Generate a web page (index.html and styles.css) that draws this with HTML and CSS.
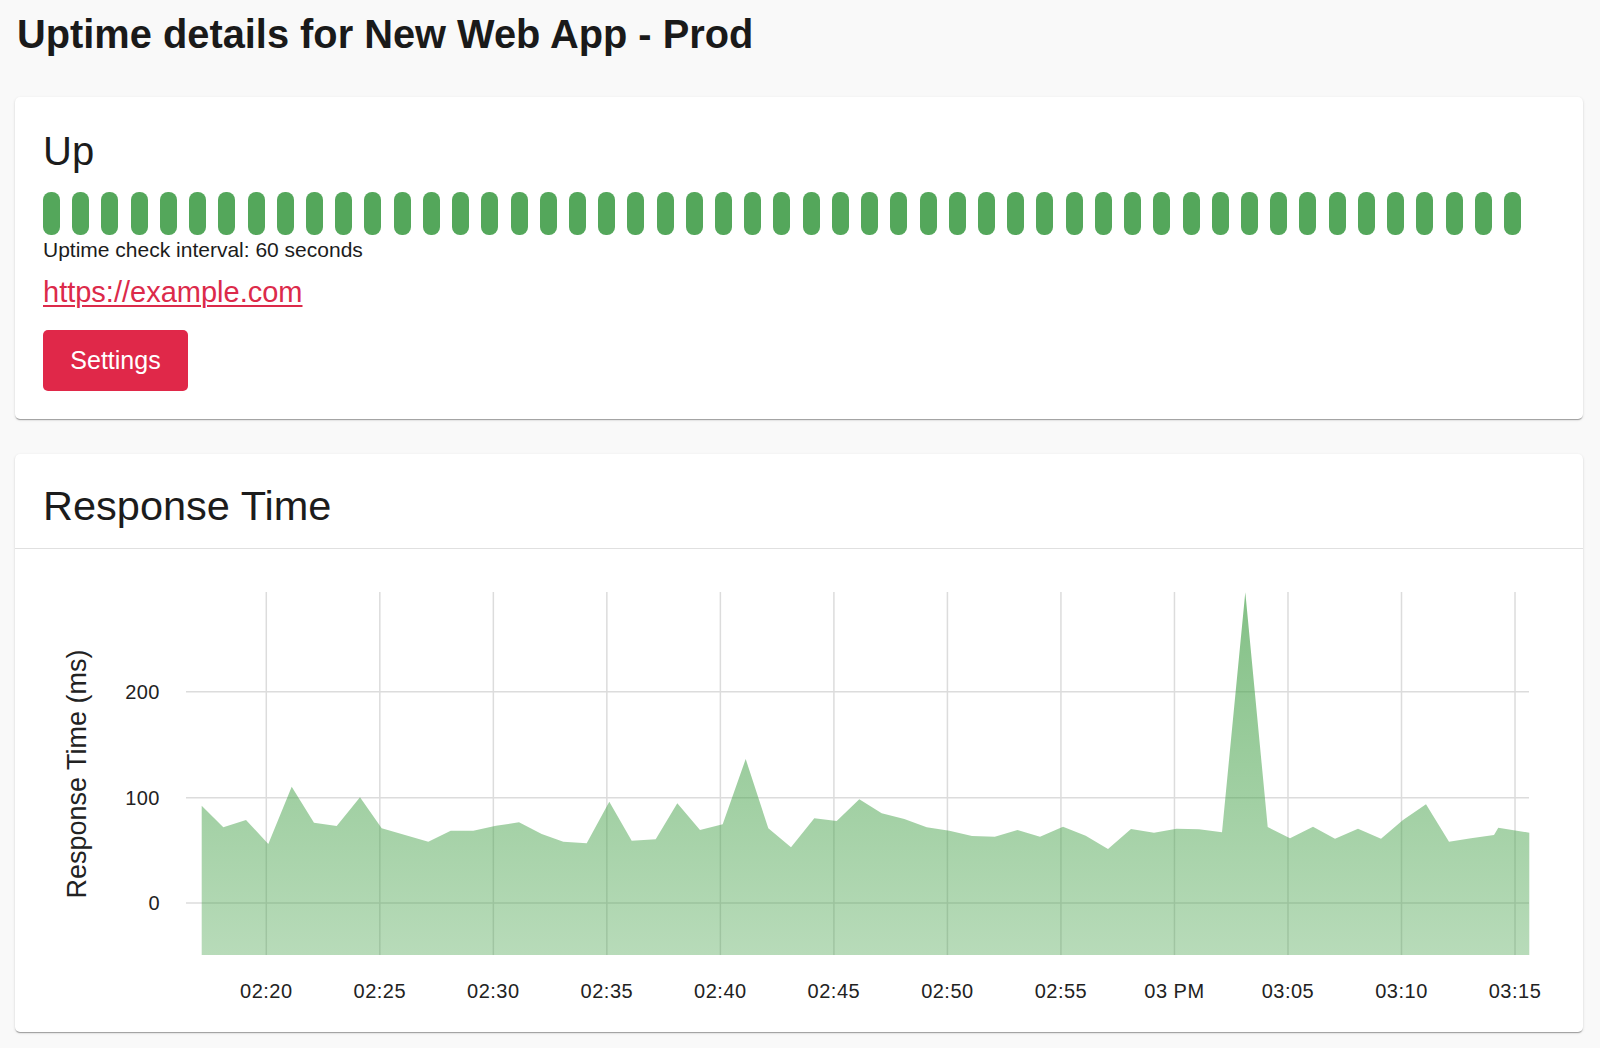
FILE: index.html
```html
<!DOCTYPE html>
<html lang="en">
<head>
  <meta charset="UTF-8">
  <meta name="viewport" content="width=device-width, initial-scale=1.0">
  <title>Uptime details</title>
  <link rel="stylesheet" href="styles.css">
</head>
<body>
  <h1 class="page-title">Uptime details for New Web App - Prod</h1>

  <div class="card status-card">
    <h2 class="status">Up</h2>
    <div class="beats" id="beats"></div>
    <div class="interval">Uptime check interval: 60 seconds</div>
    <a class="monitor-url" href="#">https://example.com</a>
    <div><button class="btn-settings">Settings</button></div>
  </div>

  <div class="card chart-card">
    <div class="card-header">
      <h2>Response Time</h2>
    </div>
    <div class="chart-body">
      <svg class="chart" viewBox="0 0 1568 483" width="1568" height="483">
        <defs>
          <linearGradient id="fill" x1="0" y1="43" x2="0" y2="406" gradientUnits="userSpaceOnUse">
            <stop offset="0" stop-color="#43a047" stop-opacity="0.66"/>
            <stop offset="1" stop-color="#43a047" stop-opacity="0.38"/>
          </linearGradient>
        </defs>
        <g class="grid" id="grid"></g>
        <polygon fill="url(#fill)" points="186.7,406 186.7,256.7 208.3,278.3 231,271 253.3,295 276.7,237.7 299,273.7 321.7,277 345,248.3 366.7,279.3 390,286 413.3,292.7 435.7,281.7 458.3,281.7 481,276.7 504,273.3 526.7,285 548.3,292.7 571.7,294.3 594.3,252.7 616.7,291.7 640.7,290.3 662.3,254.3 685,281 707.7,275.3 730.7,210 753.3,279.3 776,298.3 799.3,269.3 821.7,272 844.3,250.3 866.7,264.3 889.3,270 911.7,278.3 934.4,281.7 957,287 979.8,287.7 1002.5,281 1025,287.7 1048,277.7 1070.7,286.7 1093,300 1116,280 1139,283.7 1161.5,279.7 1184,280.3 1207,283.3 1230.3,43.3 1252.7,278 1275,289.3 1298,277.7 1320,289.7 1343,279.7 1366,289.7 1388,271 1411,255.3 1434,292.7 1456,289.3 1479,286 1483.3,278.7 1514.3,283.7 1514.3,406"/>
        <g class="ticks-y">
          <text x="145" y="142.7">200</text>
          <text x="145" y="248.7">100</text>
          <text x="145" y="354">0</text>
        </g>
        <g class="ticks-x" id="ticks-x"></g>
        <text class="axis-title" transform="translate(62 225) rotate(-90)">Response Time (ms)</text>
      </svg>
    </div>
  </div>

  <script>
    document.addEventListener("DOMContentLoaded", function () {
      const beats = document.getElementById("beats");
      for (let i = 0; i < 51; i++) {
        const beat = document.createElement("span");
        beat.classList.add("beat");
        beats.appendChild(beat);
      }

      const ns = "http://www.w3.org/2000/svg";
      const grid = document.getElementById("grid");
      const ticks = document.getElementById("ticks-x");
      const labels = ["02:20", "02:25", "02:30", "02:35", "02:40", "02:45",
                      "02:50", "02:55", "03 PM", "03:05", "03:10", "03:15"];

      // horizontal lines: 200, 100, 0
      [142.7, 248.7, 354].forEach(function (y) {
        const line = document.createElementNS(ns, "line");
        line.setAttribute("x1", 171);
        line.setAttribute("x2", 1514);
        line.setAttribute("y1", y);
        line.setAttribute("y2", y);
        grid.appendChild(line);
      });

      labels.forEach(function (label, i) {
        const x = 251.3 + i * 113.52;
        const line = document.createElementNS(ns, "line");
        line.setAttribute("x1", x);
        line.setAttribute("x2", x);
        line.setAttribute("y1", 43);
        line.setAttribute("y2", 406);
        grid.appendChild(line);

        const text = document.createElementNS(ns, "text");
        text.setAttribute("x", x);
        text.setAttribute("y", 442);
        text.textContent = label;
        ticks.appendChild(text);
      });
    });
  </script>
</body>
</html>
```

FILE: styles.css
```css
body {
  margin: 0;
  padding: 10px 17px 20px 15px;
  background: #f9f9f9;
  font-family: "Liberation Sans", Arial, sans-serif;
  color: #1c1c1c;
}

.page-title {
  margin: 0 0 39px 2px;
  font-size: 39.8px;
  line-height: 48px;
  font-weight: bold;
  color: #1a1a1a;
}

.card {
  background: #fff;
  border-radius: 5px;
  box-shadow: 0 2px 1px -1px rgba(0, 0, 0, 0.2), 0 1px 1px 0 rgba(0, 0, 0, 0.14), 0 1px 3px 0 rgba(0, 0, 0, 0.12);
}

.status-card {
  padding: 30px 28px 28px 28px;
}

.status {
  margin: 0;
  font-size: 40px;
  line-height: 48px;
  font-weight: normal;
}

.beats {
  display: flex;
  gap: 12.22px;
  margin-top: 17px;
}

.beat {
  width: 17px;
  height: 43px;
  border-radius: 8px;
  background: #54a75b;
}

.interval {
  margin-top: 3px;
  font-size: 21px;
  line-height: 24px;
}

.monitor-url {
  display: inline-block;
  margin-top: 13px;
  font-size: 29px;
  line-height: 34px;
  color: #dc2a4a;
  text-decoration-thickness: 2px;
  text-underline-offset: 3px;
}

.btn-settings {
  margin-top: 21px;
  width: 145px;
  height: 61px;
  border: none;
  border-radius: 5px;
  background: #e02849;
  color: #fff;
  font-family: "Liberation Sans", Arial, sans-serif;
  font-size: 25px;
  cursor: pointer;
}

.chart-card {
  margin-top: 35px;
}

.card-header {
  padding: 28px 28px 18px 28px;
  border-bottom: 1px solid #e0e0e0;
}

.card-header h2 {
  margin: 0;
  font-size: 41.5px;
  line-height: 48px;
  font-weight: normal;
}

.chart-body {
  height: 483px;
}

.chart {
  display: block;
}

.grid line {
  stroke: #dcdcdc;
  stroke-width: 1.5;
}

.chart text {
  font-family: "Liberation Sans", Arial, sans-serif;
  fill: #222;
}

.ticks-y text {
  font-size: 20px;
  letter-spacing: 0.5px;
  text-anchor: end;
  dominant-baseline: central;
}

.ticks-x text {
  font-size: 20px;
  letter-spacing: 0.5px;
  text-anchor: middle;
  dominant-baseline: central;
}

.axis-title {
  font-size: 27px;
  text-anchor: middle;
  dominant-baseline: central;
}
```
